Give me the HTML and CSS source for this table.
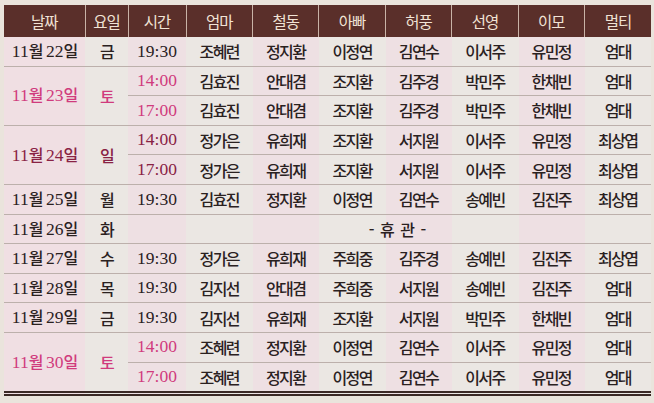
FILE: index.html
```html
<!DOCTYPE html>
<html lang="ko">
<head>
<meta charset="utf-8">
<link rel="stylesheet" href="styles.css">
</head>
<body>
<table class="schedule">
  <colgroup>
    <col class="c-date"><col class="c-day"><col class="c-time">
    <col class="c-role"><col class="c-role"><col class="c-role"><col class="c-role"><col class="c-role"><col class="c-role"><col class="c-role">
  </colgroup>
  <thead>
    <tr><th>날짜</th><th>요일</th><th>시간</th><th>엄마</th><th>철동</th><th>아빠</th><th>허풍</th><th>선영</th><th>이모</th><th>멀티</th></tr>
  </thead>
  <tbody>
    <tr><td class="date"><span class="n">11</span>월 <span class="n">22</span>일</td><td>금</td><td class="time">19:30</td><td>조혜련</td><td>정지환</td><td>이정연</td><td>김연수</td><td>이서주</td><td>유민정</td><td>엄대</td></tr>
    <tr><td class="date sat" rowspan="2"><span class="n">11</span>월 <span class="n">23</span>일</td><td class="sat" rowspan="2">토</td><td class="time sat">14:00</td><td>김효진</td><td>안대겸</td><td>조지환</td><td>김주경</td><td>박민주</td><td>한채빈</td><td>엄대</td></tr>
    <tr><td class="time sat">17:00</td><td>김효진</td><td>안대겸</td><td>조지환</td><td>김주경</td><td>박민주</td><td>한채빈</td><td>엄대</td></tr>
    <tr><td class="date sun" rowspan="2"><span class="n">11</span>월 <span class="n">24</span>일</td><td class="sun" rowspan="2">일</td><td class="time sun">14:00</td><td>정가은</td><td>유희재</td><td>조지환</td><td>서지원</td><td>이서주</td><td>유민정</td><td>최상엽</td></tr>
    <tr><td class="time sun">17:00</td><td>정가은</td><td>유희재</td><td>조지환</td><td>서지원</td><td>이서주</td><td>유민정</td><td>최상엽</td></tr>
    <tr><td class="date"><span class="n">11</span>월 <span class="n">25</span>일</td><td>월</td><td class="time">19:30</td><td>김효진</td><td>정지환</td><td>이정연</td><td>김연수</td><td>송예빈</td><td>김진주</td><td>최상엽</td></tr>
    <tr><td class="date"><span class="n">11</span>월 <span class="n">26</span>일</td><td>화</td><td class="closed" colspan="8">- 휴 관 -</td></tr>
    <tr><td class="date"><span class="n">11</span>월 <span class="n">27</span>일</td><td>수</td><td class="time">19:30</td><td>정가은</td><td>유희재</td><td>주희중</td><td>김주경</td><td>송예빈</td><td>김진주</td><td>최상엽</td></tr>
    <tr><td class="date"><span class="n">11</span>월 <span class="n">28</span>일</td><td>목</td><td class="time">19:30</td><td>김지선</td><td>안대겸</td><td>주희중</td><td>서지원</td><td>송예빈</td><td>김진주</td><td>엄대</td></tr>
    <tr><td class="date"><span class="n">11</span>월 <span class="n">29</span>일</td><td>금</td><td class="time">19:30</td><td>김지선</td><td>유희재</td><td>조지환</td><td>서지원</td><td>박민주</td><td>한채빈</td><td>엄대</td></tr>
    <tr><td class="date sat" rowspan="2"><span class="n">11</span>월 <span class="n">30</span>일</td><td class="sat" rowspan="2">토</td><td class="time sat">14:00</td><td>조혜련</td><td>정지환</td><td>이정연</td><td>김연수</td><td>이서주</td><td>유민정</td><td>엄대</td></tr>
    <tr><td class="time sat">17:00</td><td>조혜련</td><td>정지환</td><td>이정연</td><td>김연수</td><td>이서주</td><td>유민정</td><td>엄대</td></tr>
  </tbody>
</table>
</body>
</html>
```

FILE: styles.css
```css
html, body {
  margin: 0;
  padding: 0;
}
body {
  background: #eae4dc;
  padding: 5px 3px 0 4px;
}
.schedule {
  width: 647px;
  table-layout: fixed;
  border-collapse: collapse;
  font-family: "Noto Sans CJK KR", sans-serif;
  color: #2a211f;
  background: linear-gradient(to right,
    #f0dfe3 0 81px,
    #ebe7e3 81px 124px,
    #eee0e3 124px 182px,
    #ebe7e3 182px 249px,
    #eee0e3 249px 315px,
    #ebe7e3 315px 382px,
    #eee0e3 382px 448px,
    #ebe7e3 448px 515px,
    #eee0e3 515px 581px,
    #ebe7e3 581px 647px);
  border-bottom: 5px double #3b2925;
}
.c-date { width: 81px; }
.c-day { width: 43px; }
.c-time { width: 58px; }
.c-role { width: 66.4px; }

.schedule th {
  height: 32px;
  padding: 0;
  background: #5a2f2a;
  color: #f1e3d5;
  font-weight: normal;
  font-size: 15.5px;
  letter-spacing: -1px;
  border-left: 1px solid #c9b3a7;
}
.schedule th:first-child {
  border-left: none;
}
.schedule td {
  height: 28.6px;
  padding: 0;
  text-align: center;
  vertical-align: middle;
  font-size: 16px;
  font-weight: 500;
  letter-spacing: -1.6px;
  border-bottom: 1px solid #bcb0ab;
  line-height: 1;
}
.schedule .date {
  letter-spacing: -1px;
}
.schedule .n,
.schedule .time {
  font-family: "Liberation Serif", "Noto Sans CJK KR", serif;
  font-size: 17.5px;
  font-weight: normal;
  letter-spacing: 0;
}
.schedule .sat {
  color: #d03b7d;
}
.schedule .sun {
  color: #892244;
}
.schedule .closed {
  padding-left: 16px;
  letter-spacing: 0;
  word-spacing: 1px;
}
```
